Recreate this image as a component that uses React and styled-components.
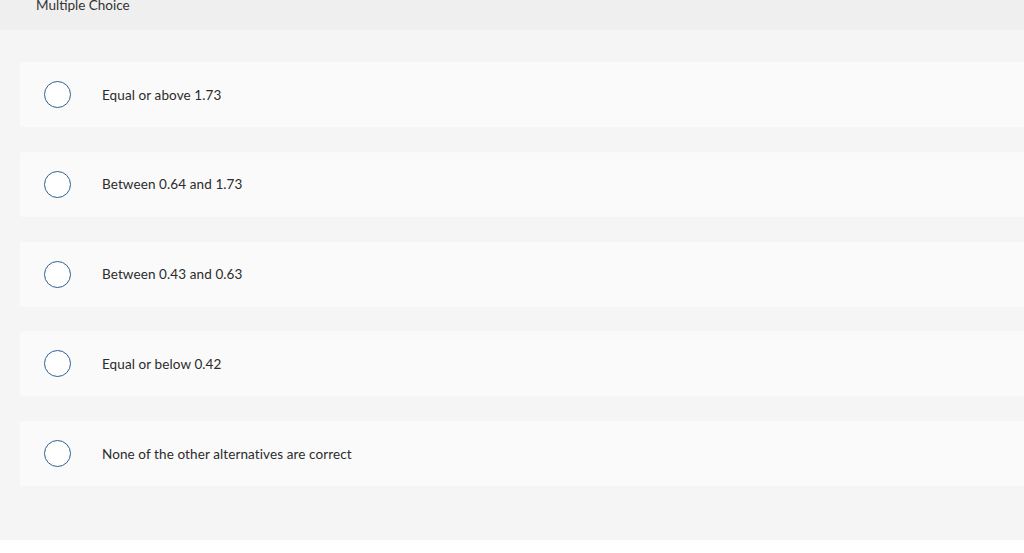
import styled, { createGlobalStyle } from "styled-components";

const GlobalStyle = createGlobalStyle`
  html, body {
    margin: 0;
    padding: 0;
    background: #ffffff;
    font-family: Lato, "Liberation Sans", sans-serif;
  }
`;

const options = [
  "Equal or above 1.73",
  "Between 0.64 and 1.73",
  "Between 0.43 and 0.63",
  "Equal or below 0.42",
  "None of the other alternatives are correct",
];

const Page = styled.div`
  width: 1024px;
  overflow: hidden;
`;

const Header = styled.div`
  height: 30px;
  background: #efefef;
  padding-left: 36px;
  overflow: hidden;
`;

const HeaderTitle = styled.div`
  margin-top: -3px;
  font-size: 13.5px;
  line-height: 16px;
  color: #333333;
`;

const Body = styled.div`
  background: #f5f5f5;
  padding: 32px 0 54px 20px;
  display: flex;
  flex-direction: column;
  gap: 24.75px;
`;

const Card = styled.label`
  display: flex;
  align-items: center;
  height: 65px;
  width: 1020px;
  background: #fafafa;
  border-radius: 3px;
  padding-left: 24px;
  box-sizing: border-box;
  cursor: pointer;
`;

const Radio = styled.span`
  width: 25px;
  height: 25px;
  border: 1.5px solid #2d5f91;
  border-radius: 50%;
  background: #ffffff;
  flex: none;
`;

const OptionText = styled.span`
  margin-left: 31px;
  font-size: 13.5px;
  color: #2b2b2b;
  letter-spacing: 0.1px;
`;

export default function App() {
  return (
    <Page>
      <GlobalStyle />
      <Header>
        <HeaderTitle>Multiple Choice</HeaderTitle>
      </Header>
      <Body>
        {options.map((o) => (
          <Card key={o}>
            <Radio />
            <OptionText>{o}</OptionText>
          </Card>
        ))}
      </Body>
    </Page>
  );
}
